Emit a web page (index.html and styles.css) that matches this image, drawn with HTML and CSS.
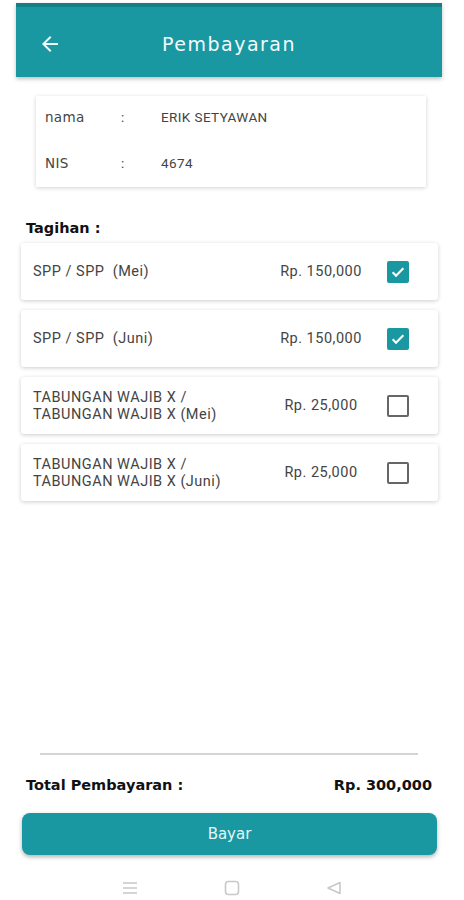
FILE: index.html
```html
<!DOCTYPE html>
<html lang="id">
<head>
    <meta charset="UTF-8">
    <meta name="viewport" content="width=device-width, initial-scale=1.0">
    <title>Pembayaran</title>
    <link rel="stylesheet" href="styles.css">
</head>
<body>
    <div class="screen">
        <div class="appbar">
            <svg class="back" width="24" height="24" viewBox="0 0 24 24">
                <path d="M20 11H7.83l5.59-5.59L12 4l-8 8 8 8 1.41-1.41L7.83 13H20v-2z" fill="#f2fbfc"/>
            </svg>
            <div class="title">Pembayaran</div>
        </div>

        <div class="info-card">
            <div class="info-row">
                <span class="info-label">nama</span>
                <span class="info-colon">:</span>
                <span class="info-value">ERIK SETYAWAN</span>
            </div>
            <div class="info-row">
                <span class="info-label">NIS</span>
                <span class="info-colon">:</span>
                <span class="info-value">4674</span>
            </div>
        </div>

        <div class="section-title">Tagihan :</div>

        <div class="bills">
            <div class="bill">
                <div class="bill-name">SPP / SPP&nbsp; (Mei)</div>
                <div class="bill-price">Rp. 150,000</div>
                <div class="check checked">
                    <svg width="16" height="16" viewBox="0 0 24 24"><path d="M4 12.5l5 5L20 6.5" fill="none" stroke="#fff" stroke-width="3.2"/></svg>
                </div>
            </div>
            <div class="bill">
                <div class="bill-name">SPP / SPP&nbsp; (Juni)</div>
                <div class="bill-price">Rp. 150,000</div>
                <div class="check checked">
                    <svg width="16" height="16" viewBox="0 0 24 24"><path d="M4 12.5l5 5L20 6.5" fill="none" stroke="#fff" stroke-width="3.2"/></svg>
                </div>
            </div>
            <div class="bill">
                <div class="bill-name">TABUNGAN WAJIB X /<br>TABUNGAN WAJIB X (Mei)</div>
                <div class="bill-price">Rp. 25,000</div>
                <div class="check"></div>
            </div>
            <div class="bill">
                <div class="bill-name">TABUNGAN WAJIB X /<br>TABUNGAN WAJIB X (Juni)</div>
                <div class="bill-price">Rp. 25,000</div>
                <div class="check"></div>
            </div>
        </div>

        <div class="spacer"></div>

        <div class="divider"></div>

        <div class="total">
            <span>Total Pembayaran :</span>
            <span>Rp. 300,000</span>
        </div>

        <button class="pay">Bayar</button>

        <div class="navbar">
            <svg width="16" height="16" viewBox="0 0 16 16">
                <path d="M1 3h14M1 8h14M1 13h14" stroke="#c8c8c8" stroke-width="1.6"/>
            </svg>
            <svg width="16" height="16" viewBox="0 0 16 16">
                <rect x="1.5" y="1.5" width="13" height="13" rx="3" fill="none" stroke="#c8c8c8" stroke-width="1.6"/>
            </svg>
            <svg width="16" height="16" viewBox="0 0 16 16">
                <path d="M14 2.5L2 8l12 5.5z" fill="none" stroke="#c8c8c8" stroke-width="1.6" stroke-linejoin="round"/>
            </svg>
        </div>
    </div>
</body>
</html>
```

FILE: styles.css
```css
body {
    margin: 0;
    background-color: #fff;
    font-family: Roboto, "Liberation Sans", sans-serif;
    color: #444;
}

.screen {
    width: 464px;
    height: 900px;
    display: flex;
    flex-direction: column;
}

.appbar {
    margin: 3px 22px 0 16px;
    height: 66px;
    padding-top: 4px;
    border-top: 4px solid #137f87;
    background-color: #1a98a2;
    display: flex;
    align-items: center;
    position: relative;
    box-shadow: 0 2px 4px rgba(0, 0, 0, 0.25);
}

.back {
    margin-left: 22px;
}

.title {
    position: absolute;
    left: 0;
    right: 0;
    text-align: center;
    font-family: "DejaVu Sans", sans-serif;
    font-size: 19px;
    letter-spacing: 1.5px;
    color: #f2fbfc;
    pointer-events: none;
}

.info-card {
    margin: 19px 38px 0 36px;
    padding: 0 9px 3px;
    background-color: #fff;
    box-shadow: 0 1px 4px rgba(0, 0, 0, 0.18);
    display: flex;
    flex-direction: column;
    gap: 4px;
}

.info-row {
    height: 42px;
    display: flex;
    align-items: center;
    font-size: 13.5px;
    letter-spacing: 0.4px;
    color: #444;
}

.info-label {
    width: 76px;
    font-family: "DejaVu Sans", sans-serif;
    font-size: 13.5px;
    letter-spacing: 0.3px;
}

.info-colon {
    width: 40px;
}

.section-title {
    margin: 33px 0 0 26px;
    font-family: "DejaVu Sans", sans-serif;
    font-weight: bold;
    font-size: 14.5px;
    color: #111;
}

.bills {
    margin: 7px 26px 0 21px;
    display: flex;
    flex-direction: column;
    gap: 10px;
}

.bill {
    height: 57px;
    padding: 0 29px 0 12px;
    background-color: #fff;
    box-shadow: 0 1px 4px rgba(0, 0, 0, 0.2);
    border-radius: 3px;
    display: flex;
    align-items: center;
    font-size: 14.5px;
    letter-spacing: 0.5px;
    color: #444;
}

.bill-name {
    flex: 1;
    line-height: 17px;
}

.bill-price {
    width: 104px;
    text-align: center;
    white-space: nowrap;
}

.check {
    margin-left: 14px;
    width: 18px;
    height: 18px;
    border: 2px solid #666;
    border-radius: 2px;
    display: flex;
    align-items: center;
    justify-content: center;
}

.check.checked {
    background-color: #1a98a2;
    border-color: #1a98a2;
}

.spacer {
    flex: 1;
}

.divider {
    margin: 0 46px 0 40px;
    height: 2px;
    background-color: #d4d4d4;
}

.total {
    margin: 22px 32px 0 26px;
    display: flex;
    justify-content: space-between;
    font-family: "DejaVu Sans", sans-serif;
    font-weight: bold;
    font-size: 14.5px;
    color: #111;
}

.pay {
    margin: 20px 27px 0 22px;
    height: 42px;
    border: none;
    border-radius: 8px;
    background-color: #1a98a2;
    color: #e6f6f7;
    font-family: "DejaVu Sans", sans-serif;
    font-size: 15px;
    box-shadow: 0 2px 4px rgba(0, 0, 0, 0.3);
}

.navbar {
    height: 45px;
    box-sizing: border-box;
    padding-bottom: 4px;
    display: flex;
    align-items: flex-end;
    justify-content: center;
    gap: 86px;
}
```
